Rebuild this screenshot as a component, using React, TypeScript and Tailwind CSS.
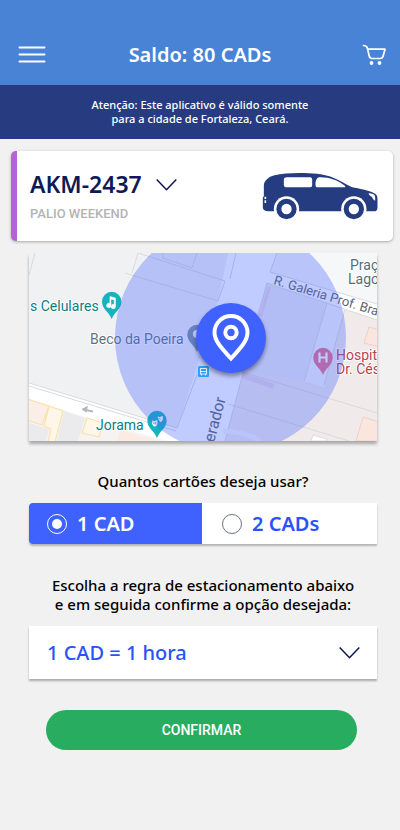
import { useState } from 'react';

type ChevronProps = {
  className?: string;
};

function Chevron({ className }: ChevronProps) {
  return (
    <svg
      viewBox="0 0 21 13"
      className={className}
      fill="none"
      stroke="#0b1354"
      strokeWidth="1.5"
      aria-hidden="true"
    >
      <path d="M.7 1.5 10.5 11.7 20.3 1.5" />
    </svg>
  );
}

function Car() {
  return (
    <svg viewBox="183 98 350 144" className="h-12 w-[117px] shrink-0" aria-hidden="true">
      <path
        fill="#263c80"
        d="M188 138c1-14 13-25 32-30 24-6 56-8 90-7 36 1 64 5 86 14 22 9 38 19 57 29 22 4 47 9 63 16 9 4 13 8 13 18v27c0 7-4 11-11 11H204c-12 0-19-4-19-12v-30c3-2 3-4 3-8z"
      />
      <path
        fill="#fff"
        d="M257 114h70c4 0 6 3 6 6v18c0 4-2 6-6 6h-70c-6 0-9-2-9-7v-16c0-5 4-7 9-7zM354 114c29-1 54 8 77 25 3 3 2 5-2 5h-79c-5 0-7-3-7-7 0-12 3-22 11-23zM502 162c9 0 20 3 20 11v11c-5-2-8-6-9-11-6-2-9-6-11-11zM190 172h5v7h-5zM190 183h5v8h-5z"
      />
      <g fill="#fff">
        <circle cx="256" cy="209" r="38" />
        <circle cx="458" cy="209" r="38" />
      </g>
      <g fill="#fff" stroke="#263c80" strokeWidth="15">
        <circle cx="256" cy="209" r="23" />
        <circle cx="458" cy="209" r="23" />
      </g>
    </svg>
  );
}

function StreetMap() {
  return (
    <svg
      viewBox="0 0 348 188"
      preserveAspectRatio="xMidYMid slice"
      className="h-[188px] w-full font-[Roboto,sans-serif]"
      role="img"
      aria-label="Mapa"
    >
      <rect width="348" height="188" fill="#fff" />
      {/* blocks */}
      <path d="M0 0H199L189 48 148 175 0 130Z" fill="#f0f1f3" />
      <path d="M248 0H348V51L241 19Z" fill="#f5f7f8" />
      <path d="M238 30 348 67V188H196Z" fill="#f0eaeb" />
      <path d="M238 30 298 50 275 128 210 118Z" fill="#eceaf0" />
      <path d="M298 50 316 56 295 134 274 128Z" fill="#f4f5f8" />
      <path d="M0 146 71 169 124 184 140 188H0Z" fill="#f6f3f2" />
      <g fill="none" stroke="#d8dadd" strokeWidth="1">
        <path d="M0 130 148 175 168 122M0 133 147 178M0 22 6 0M109 0 103 20M96 20 189 48 196 28 109 0M134 0v5l29 10 5-15M207 0 201 26M248 0 241 19 348 51M238 30 348 67M238 30 196 188M298 50 275 128M316 56 295 132M210 118 348 160M199 151 320 188" />
      </g>
      {/* buildings */}
      <g>
        <path d="M35 158 56 165 49 188H28Z" fill="#ebebee" />
        <path d="M0 170 20 176 17 188H0Z" fill="#ebebee" />
        <path d="M91 177 130 188H88Z" fill="#fbece3" />
      </g>
      <g fill="#fdf6e9" stroke="#fae3a8" strokeWidth="1.2">
        <path d="M-2 146 20 153 13 172-2 167Z" fill="#fbeee8" />
        <path d="M20 153 34 158 26 189H19L22 176 15 173Z" />
        <path d="M58 165 74 170 70 184 53 180Z" />
      </g>
      <g fill="#fbe5df" stroke="#f2cfc5" strokeWidth="1">
        <path d="M340 74 350 77V94L335 90Z" />
        <path d="M334 164 350 169V188H327Z" />
        <path d="M284 182 298 186V188H282Z" fill="#fff" stroke="#ddd" />
      </g>
      <path d="M239 33 242 34 233 64 230 63Z" fill="#ebd6e2" />
      <path d="M215 120 246 131 244 136 213 125Z" fill="#e8d9e3" />
      <path d="M194 178c18 1 36 5 40 16" fill="none" stroke="#f7f5fa" strokeWidth="5" />
      <path d="M64 158.500 54 156.500" stroke="#b5b8c2" strokeWidth="2" />
      <path d="m52.500 156 6.500-3.300-1.500 7Z" fill="#b5b8c2" />

      {/* street names */}
      <g fill="#5e6570" fontSize="13" stroke="#fff" strokeWidth="2" paintOrder="stroke">
        <text transform="translate(244 31) rotate(17)">R. Galeria Prof. Bra</text>
        <text transform="translate(185 190) rotate(-75)" fontSize="16">erador</text>
      </g>

      {/* places */}
      <g fontSize="14" stroke="#fff" strokeWidth="2" paintOrder="stroke">
        <text x="1" y="58" fill="#0c7d83">s Celulares</text>
        <text x="61" y="91" fill="#5d7380">Beco da Poeira</text>
        <text x="67" y="177" fill="#0c7d83">Jorama</text>
        <text x="321" y="17" fill="#526f77">Praç</text>
        <text x="319" y="31" fill="#526f77">Lago</text>
        <text x="307" y="107" fill="#b8424f">Hospit</text>
        <text x="307" y="121" fill="#b8424f">Dr. Cés</text>
      </g>
      <g fill="#14b3bd">
        <path d="M82.700 66C80 59 73 56 73 48.500a9.700 9.700 0 0 1 19.400 0C92.400 56 85.400 59 82.700 66Z" />
        <path d="M128 185c-2.700-7-9.700-10-9.700-17.500a9.700 9.700 0 0 1 19.400 0C137.700 175 130.700 178 128 185Z" />
        <path d="M168 99c-2.700-7-9.700-10-9.700-17.500a9.700 9.700 0 0 1 19.400 0C177.700 89 170.700 92 168 99Z" fill="#7d909f" />
        <path d="M294 122c-2.700-7-9.700-10-9.700-17.500a9.700 9.700 0 0 1 19.400 0C303.700 112 296.700 115 294 122Z" fill="#e9718b" />
      </g>
      <g fill="#fff">
        <path d="M81 43.500 86.500 45v8.500a2.200 2.200 0 1 1-1.300-2V47L82 46v6.500a2.200 2.200 0 1 1-1.200-2Z" stroke="#fff" strokeWidth=".5" />
        <path d="M123 167.500c2 .6 3.500.5 5.200-.4.700 3 .4 6-2.200 6.500-2.300-.3-3.400-3-3-6.100ZM128.500 163.500c2 .7 3.600.4 5.200-.7.600 3.300.2 5.600-2.400 6.300l-1.700-2.600Z" />
        <path d="m124.300 170 1 .5m1.700-.8-.9.700M130.500 165.500l.7.300" stroke="#3b8fc0" />
      </g>
      <circle cx="168" cy="81" r="4" fill="#fff" />
      <path d="M290.500 99.500v10M297.500 99.500v10M290.500 104.500h7" stroke="#fff" strokeWidth="2.200" />

      {/* search radius */}
      <circle cx="201.500" cy="84.500" r="115.500" fill="#4060ff" fillOpacity=".33" />

      <rect x="169" y="113" width="11" height="11" rx="1.500" fill="#2a9df4" />
      <path d="M171.500 115.500h6v5.500h-6zM171.500 118.500h6M172.500 121v1.500M176.500 121v1.500" fill="none" stroke="#dce9ff" strokeWidth="1.200" />
    </svg>
  );
}

function App() {
  const [cards, setCards] = useState('1');

  return (
    <div className="min-h-screen bg-[#f1f1f1] pb-20 font-['Noto_Sans',sans-serif] text-black">
      <header className="flex items-center justify-between bg-[#4983d5] px-[14px] pt-10 pb-4 text-white">
        <button type="button" aria-label="Menu" className="flex w-9 justify-center py-1">
          <svg viewBox="0 0 28 20" className="h-5 w-7" stroke="currentColor" strokeWidth="2" strokeLinecap="round">
            <path d="M1.500 2.500h25M1.500 9.500h25M1.500 16.500h25" />
          </svg>
        </button>
        <h1 className="text-xl leading-[29px] font-semibold">Saldo: 80 CADs</h1>
        <button type="button" aria-label="Carrinho" className="flex w-9 justify-end">
          <svg viewBox="0 0 24 22" className="h-[22px] w-6" fill="none" stroke="currentColor" strokeWidth="1.700" strokeLinecap="round" strokeLinejoin="round">
            <path d="M1.500 1.500c2.500 0 3.500.7 4 3l1.700 7.500c.5 2 1.200 2.500 3 2.500h8c1.700 0 2.400-.5 2.800-2L23 5.200H6" />
            <circle cx="9.500" cy="19" r="1.900" fill="currentColor" stroke="none" />
            <circle cx="17.500" cy="19" r="1.900" fill="currentColor" stroke="none" />
          </svg>
        </button>
      </header>

      <p className="bg-[#273c80] px-4 py-[13px] text-center text-[11px] leading-[14px] font-medium text-white">
        Atenção: Este aplicativo é válido somente
        <br />
        para a cidade de Fortaleza, Ceará.
      </p>

      <main>
        <section className="mt-3 mr-[7px] ml-[11px] flex h-[90px] items-center justify-between rounded-[5px] border-l-6 border-[#b660dc] bg-white pr-[14px] pl-[13px] shadow-[0_1px_3px_rgba(0,0,0,0.3)]">
          <div>
            <label className="flex items-center gap-[14px]">
              <span className="sr-only">Veículo</span>
              <select className="h-8 appearance-none text-[23px] leading-8 font-semibold text-[#0f1a55]">
                <option>AKM-2437</option>
              </select>
              <Chevron className="h-[13px] w-[21px]" />
            </label>
            <p className="mt-1 font-[Roboto,sans-serif] text-[13px] leading-5 font-medium text-[#b3b3b3]">PALIO WEEKEND</p>
          </div>
          <Car />
        </section>

        <div className="mt-3 mr-[23px] ml-[29px]">
          <div className="relative shadow-[0_3px_3px_rgba(0,0,0,0.3)]">
            <StreetMap />
            <div className="absolute inset-0 flex items-center justify-center">
              <div className="relative left-7 flex size-[70px] -translate-y-[9px] items-center justify-center rounded-full bg-[#3f62ff] shadow-[0_3px_4px_rgba(0,0,0,0.4)]">
                <svg viewBox="0 0 38 48" className="h-12 w-[38px]" fill="none" stroke="#fff" strokeWidth="4">
                  <path d="M19 44.500C12 36.500 2.500 28 2.500 18.500a16.500 16.500 0 0 1 33 0C35.500 28 26 36.500 19 44.500Z" />
                  <circle cx="19" cy="18.500" r="5.700" />
                </svg>
              </div>
            </div>
          </div>

          <fieldset className="mt-7">
            <legend className="w-full text-center text-[15px] leading-6 font-medium">Quantos cartões deseja usar?</legend>
            <div className="mt-[10px] flex h-[41px] rounded-l-[4px] bg-white text-xl font-semibold shadow-[0_2px_2px_rgba(0,0,0,0.25)]">
              <label className="flex flex-1 items-center gap-[10px] rounded-l-[4px] bg-white pl-[18px] text-[#2853f8] has-checked:bg-[#3f62ff] has-checked:text-white">
                <input
                  type="radio"
                  name="cards"
                  value="1"
                  checked={cards === '1'}
                  onChange={(e) => setCards(e.target.value)}
                  className="size-5 appearance-none rounded-full border border-gray-500 bg-clip-content p-1 checked:border-white checked:bg-white"
                />
                1 CAD
              </label>
              <label className="flex flex-1 items-center gap-[10px] bg-white pl-5 text-[#2853f8] has-checked:bg-[#3f62ff] has-checked:text-white">
                <input
                  type="radio"
                  name="cards"
                  value="2"
                  checked={cards === '2'}
                  onChange={(e) => setCards(e.target.value)}
                  className="size-5 appearance-none rounded-full border border-gray-500 bg-clip-content p-1 checked:border-white checked:bg-white"
                />
                2 CADs
              </label>
            </div>
          </fieldset>

          <label htmlFor="rule" className="mt-8 block text-center text-[15px] leading-[19px] font-medium">
            Escolha a regra de estacionamento abaixo
            <br />
            e em seguida confirme a opção desejada:
          </label>
          <div className="mt-3 grid items-center bg-white shadow-[0_2px_2px_rgba(0,0,0,0.3)]">
            <select
              id="rule"
              className="col-start-1 row-start-1 h-[53px] w-full appearance-none pl-[18px] text-xl font-medium text-[#2853f8]"
            >
              <option>1 CAD = 1 hora</option>
            </select>
            <Chevron className="pointer-events-none col-start-1 row-start-1 mr-[17px] h-[13px] w-[21px] justify-self-end" />
          </div>
        </div>

        <div className="mt-[31px] mr-[43px] ml-[46px]">
          <button
            type="button"
            className="h-10 w-full rounded-full bg-[#28ad60] font-[Roboto,sans-serif] text-sm font-medium text-white"
          >
            CONFIRMAR
          </button>
        </div>
      </main>
    </div>
  );
}

export default App;
